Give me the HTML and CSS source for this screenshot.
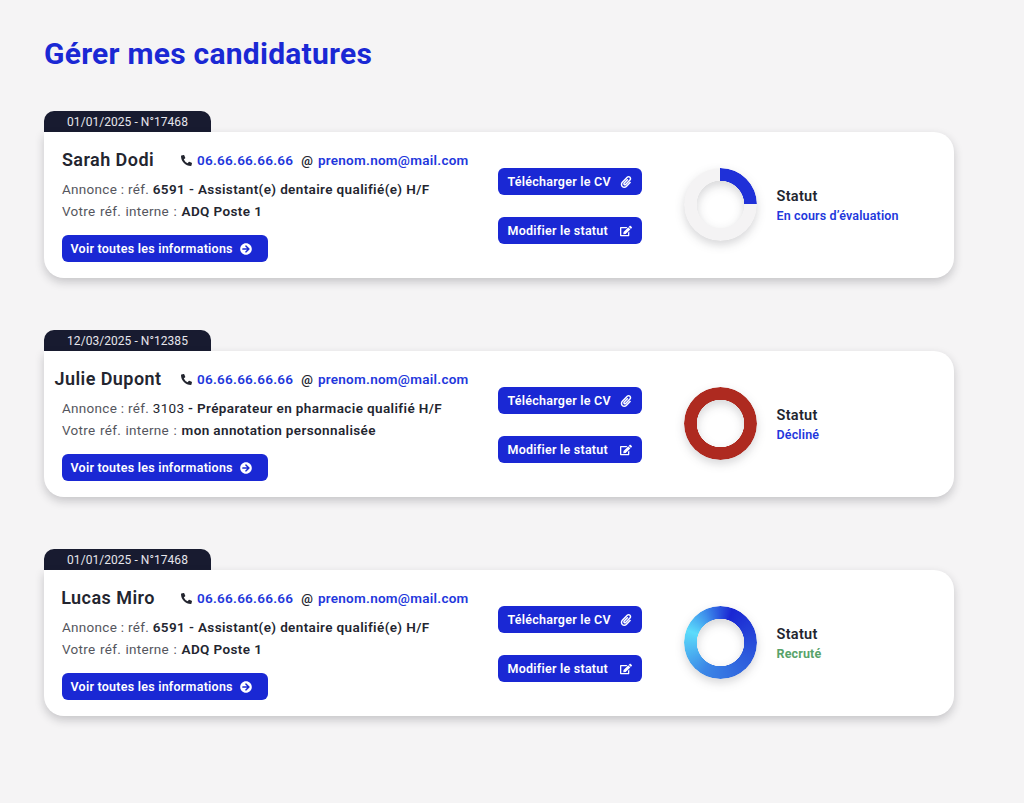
FILE: index.html
```html
<!DOCTYPE html>
<html lang="fr">
<head>
<meta charset="utf-8">
<title>Gérer mes candidatures</title>
<link rel="stylesheet" href="styles.css">
</head>
<body>
<svg class="defs" width="0" height="0" aria-hidden="true">
  <symbol id="i-phone" viewBox="0 0 512 512"><path d="M497.39 361.8l-112-48a24 24 0 0 0-28 6.9l-49.6 60.6A370.66 370.66 0 0 1 130.6 204.11l60.6-49.6a23.94 23.94 0 0 0 6.9-28l-48-112A24.16 24.16 0 0 0 122.6.61l-104 24A24 24 0 0 0 0 48c0 256.5 207.9 464 464 464a24 24 0 0 0 23.4-18.6l24-104a24.29 24.29 0 0 0-14.01-27.6z"/></symbol>
  <symbol id="i-arrow" viewBox="0 0 512 512"><path d="M256 8c137 0 248 111 248 248S393 504 256 504 8 393 8 256 119 8 256 8zm-28.9 143.6l75.5 72.4H120c-13.3 0-24 10.7-24 24v16c0 13.3 10.7 24 24 24h182.6l-75.5 72.4c-9.7 9.3-9.9 24.8-.4 34.3l11 10.9c9.4 9.4 24.6 9.4 33.9 0L404.3 273c9.4-9.4 9.4-24.6 0-33.9L271.6 106.3c-9.4-9.4-24.6-9.4-33.9 0l-11 10.9c-9.3 9.5-9.1 25 .4 34.4z"/></symbol>
  <symbol id="i-clip" viewBox="0 0 448 512"><path d="M43.246 466.142c-58.43-60.289-57.341-157.511 1.386-217.581L254.392 34c44.316-45.332 116.351-45.336 160.671 0 43.89 44.894 43.943 117.329 0 162.276L232.214 383.128c-29.855 30.537-78.633 30.111-107.982-.998-28.275-29.97-27.368-77.473 1.452-106.953l143.743-146.835c6.182-6.314 16.312-6.422 22.626-.241l22.861 22.379c6.315 6.182 6.422 16.312.241 22.626L171.427 319.927c-4.932 5.045-5.236 13.428-.648 18.292 4.372 4.634 11.245 4.711 15.688.165l182.849-186.851c19.613-20.062 19.613-52.725-.011-72.798-19.189-19.627-49.957-19.637-69.154 0L90.39 293.295c-34.763 35.56-35.299 93.12-1.191 128.313 34.01 35.093 88.985 35.137 123.058.286l172.06-175.999c6.177-6.319 16.307-6.433 22.626-.256l22.877 22.364c6.319 6.177 6.434 16.307.256 22.626l-172.06 175.998c-59.576 60.938-155.943 60.216-214.77-.485z"/></symbol>
  <symbol id="i-edit" viewBox="0 0 576 512"><path d="M402.6 83.2l90.2 90.2c3.8 3.8 3.8 10 0 13.8L274.4 405.6l-92.8 10.3c-12.4 1.4-22.9-9.1-21.5-21.5l10.3-92.8L388.8 83.2c3.8-3.8 10-3.8 13.8 0zm162-22.9l-48.8-48.8c-15.2-15.2-39.9-15.2-55.2 0l-35.4 35.4c-3.8 3.8-3.8 10 0 13.8l90.2 90.2c3.8 3.8 10 3.8 13.8 0l35.4-35.4c15.2-15.3 15.2-40 0-55.2zM384 346.2V448H64V128h229.8c3.2 0 6.2-1.3 8.5-3.5l40-40c7.6-7.6 2.2-20.5-8.5-20.5H48C21.5 64 0 85.5 0 112v352c0 26.5 21.5 48 48 48h352c26.5 0 48-21.5 48-48V306.2c0-10.7-12.9-16-20.5-8.5l-40 40c-2.2 2.3-3.5 5.3-3.5 8.5z"/></symbol>
</svg>
<main class="page">
  <h1 class="title">Gérer mes candidatures</h1>
  <div class="list">

    <article class="entry">
      <div class="tab">01/01/2025 - N°17468</div>
      <div class="card">
        <div class="info">
          <div class="head">
            <h2 class="name">Sarah Dodi</h2>
            <svg class="ico-phone"><use href="#i-phone"/></svg>
            <a class="link link-phone">06.66.66.66.66</a>
            <span class="at">@</span>
            <a class="link">prenom.nom@mail.com</a>
          </div>
          <div class="details">
            <p class="line">Annonce : réf. <b>6591 - Assistant(e) dentaire qualifié(e) H/F</b></p>
            <p class="line line-ref">Votre réf. interne : <b>ADQ Poste 1</b></p>
            <a class="btn btn-wide">Voir toutes les informations <svg class="ico-btn"><use href="#i-arrow"/></svg></a>
          </div>
        </div>
        <div class="actions">
          <a class="btn btn-action">Télécharger le CV <svg class="ico-btn"><use href="#i-clip"/></svg></a>
          <a class="btn btn-action">Modifier le statut <svg class="ico-btn"><use href="#i-edit"/></svg></a>
        </div>
        <div class="donut-wrap"><div class="donut donut-progress"></div></div>
        <div class="status">
          <div class="status-label">Statut</div>
          <div class="status-value value-blue">En cours d’évaluation</div>
        </div>
      </div>
    </article>

    <article class="entry">
      <div class="tab">12/03/2025 - N°12385</div>
      <div class="card">
        <div class="info">
          <div class="head">
            <h2 class="name">Julie Dupont</h2>
            <svg class="ico-phone"><use href="#i-phone"/></svg>
            <a class="link link-phone">06.66.66.66.66</a>
            <span class="at">@</span>
            <a class="link">prenom.nom@mail.com</a>
          </div>
          <div class="details">
            <p class="line">Annonce : réf. <span class="mid">3103</span> <b>- Préparateur en pharmacie qualifié H/F</b></p>
            <p class="line line-ref">Votre réf. interne : <b>mon annotation personnalisée</b></p>
            <a class="btn btn-wide">Voir toutes les informations <svg class="ico-btn"><use href="#i-arrow"/></svg></a>
          </div>
        </div>
        <div class="actions">
          <a class="btn btn-action">Télécharger le CV <svg class="ico-btn"><use href="#i-clip"/></svg></a>
          <a class="btn btn-action">Modifier le statut <svg class="ico-btn"><use href="#i-edit"/></svg></a>
        </div>
        <div class="donut-wrap"><div class="donut donut-declined"></div></div>
        <div class="status">
          <div class="status-label">Statut</div>
          <div class="status-value value-blue">Décliné</div>
        </div>
      </div>
    </article>

    <article class="entry">
      <div class="tab">01/01/2025 - N°17468</div>
      <div class="card">
        <div class="info">
          <div class="head">
            <h2 class="name">Lucas Miro</h2>
            <svg class="ico-phone"><use href="#i-phone"/></svg>
            <a class="link link-phone">06.66.66.66.66</a>
            <span class="at">@</span>
            <a class="link">prenom.nom@mail.com</a>
          </div>
          <div class="details">
            <p class="line">Annonce : réf. <b>6591 - Assistant(e) dentaire qualifié(e) H/F</b></p>
            <p class="line line-ref">Votre réf. interne : <b>ADQ Poste 1</b></p>
            <a class="btn btn-wide">Voir toutes les informations <svg class="ico-btn"><use href="#i-arrow"/></svg></a>
          </div>
        </div>
        <div class="actions">
          <a class="btn btn-action">Télécharger le CV <svg class="ico-btn"><use href="#i-clip"/></svg></a>
          <a class="btn btn-action">Modifier le statut <svg class="ico-btn"><use href="#i-edit"/></svg></a>
        </div>
        <div class="donut-wrap"><div class="donut donut-hired"></div></div>
        <div class="status">
          <div class="status-label">Statut</div>
          <div class="status-value value-green">Recruté</div>
        </div>
      </div>
    </article>

  </div>
</main>
</body>
</html>
```
FILE: styles.css
```css
* { box-sizing: border-box; }
html, body { margin: 0; padding: 0; }
body {
  background: #f5f4f5;
  color: #23252f;
  font-family: Roboto, "Liberation Sans", sans-serif;
  min-height: 803px;
}
.defs { display: block; height: 0; }
.page { padding: 35px 70px 0 44px; }
.title {
  margin: 0 0 39px;
  font-size: 30px;
  line-height: 37px;
  font-weight: 700;
  letter-spacing: .25px;
  color: #1a28d4;
}
.list { display: flex; flex-direction: column; gap: 52px; }
.tab {
  width: 167px;
  height: 21px;
  background: #181b30;
  color: #e6e6ec;
  border-radius: 10px 10px 0 0;
  font-size: 12px;
  line-height: 22px;
  text-align: center;
  letter-spacing: .05px;
}
.card {
  display: flex;
  align-items: flex-start;
  width: 910px;
  height: 146px;
  background: #fff;
  border-radius: 0 20px 20px 20px;
  box-shadow: 0 4px 10px rgba(30, 30, 40, .22);
}
.info { width: 454px; padding-top: 16px; }
.head { display: flex; align-items: center; height: 24px; }
.name {
  margin: 0 9px 0 0;
  width: 128px;
  text-align: center;
  font-size: 18px;
  line-height: 24px;
  font-weight: 600;
  letter-spacing: .45px;
}
.ico-phone { width: 11px; height: 11px; fill: #23252f; margin-right: 5px; }
.link {
  color: #2237dc;
  font-size: 13.5px;
  font-weight: 600;
  letter-spacing: .27px;
}
.link-phone { margin-right: 8px; }
.at { font-size: 13px; font-weight: 600; margin-right: 5px; }
.details { padding: 6px 0 0 18px; }
.line {
  margin: 0;
  font-size: 13.5px;
  line-height: 22px;
  letter-spacing: .3px;
  color: #55565e;
}
.line b { color: #23252f; font-weight: 600; letter-spacing: .38px; }
.line-ref { word-spacing: .8px; }
.line-ref b { word-spacing: 0; }
.mid { color: #23252f; }
.btn {
  display: flex;
  align-items: center;
  justify-content: space-between;
  height: 27px;
  background: #1a28d4;
  color: #fff;
  border-radius: 6px;
  font-size: 12.5px;
  font-weight: 600;
  letter-spacing: .24px;
  white-space: nowrap;
}
.btn-wide { width: 206px; margin-top: 13px; padding: 0 16px 0 8.5px; }
.actions {
  width: 144px;
  padding-top: 36px;
  display: flex;
  flex-direction: column;
  gap: 22px;
}
.btn-action { width: 144px; padding: 0 10px 0 9.5px; }
.ico-btn { width: 12px; height: 12px; fill: #fff; flex: none; }
.donut-wrap {
  margin: 36px 0 0 41.5px;
  width: 73px;
  height: 73px;
  filter: drop-shadow(0 4px 5px rgba(30, 30, 40, .18));
}
.donut {
  width: 73px;
  height: 73px;
  border-radius: 50%;
  -webkit-mask: radial-gradient(circle, transparent 23.5px, #000 24px);
  mask: radial-gradient(circle, transparent 23.5px, #000 24px);
}
.donut-progress { background: conic-gradient(#1f30d8 0 90deg, #f4f3f4 90deg 360deg); }
.donut-declined { background: #ae2a20; }
.donut-hired {
  background: conic-gradient(from 20deg, #1a26d3 0deg, #2d5cdc 100deg, #3b86e6 190deg, #5bdcfb 270deg, #3f93ec 310deg, #1a26d3 360deg);
}
.status { margin-left: 20px; padding-top: 55px; }
.status-label {
  font-size: 14.5px;
  line-height: 19px;
  font-weight: 600;
  letter-spacing: .3px;
  color: #23252f;
}
.status-value { font-size: 12.5px; line-height: 19px; font-weight: 600; letter-spacing: .15px; }
.value-blue { color: #2237dc; }
.value-green { color: #58a36a; font-weight: 700; }
```
